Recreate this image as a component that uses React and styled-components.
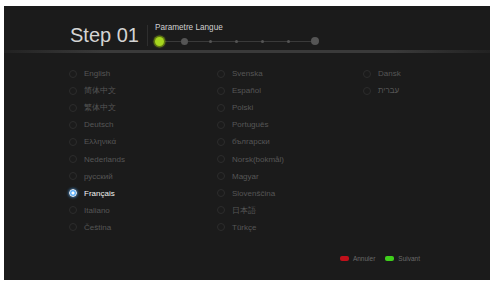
import React from 'react';
import styled, { createGlobalStyle } from 'styled-components';

const GlobalStyle = createGlobalStyle`
  html, body { margin: 0; padding: 0; background: #fff; }
  body { font-family: "Liberation Sans", Arial, sans-serif; }
`;

const Screen = styled.div`
  margin: 6px 2px 0 4px;
  height: 274px;
  background: #1b1b1b;
  display: flex;
  flex-direction: column;
`;

const Header = styled.div`
  height: 44px;
  display: flex;
  align-items: flex-end;
  padding-left: 66px;
  padding-bottom: 2px;
  box-sizing: border-box;
`;

const StepTitle = styled.div`
  font-size: 20px;
  color: #d4d4d4;
  line-height: 1;
  padding-bottom: 1px;
  padding-right: 8px;
  margin-bottom: 2px;
  border-right: 1px solid #2e2e2e;
`;

const StepInfo = styled.div`
  display: flex;
  flex-direction: column;
  padding-left: 7px;
`;

const StepName = styled.div`
  font-size: 8.2px;
  color: #cfcfcf;
  margin-bottom: 2px;
`;

const Track = styled.div`
  position: relative;
  width: 170px;
  height: 14px;
`;

const TrackLine = styled.div`
  position: absolute;
  left: 6px;
  right: 10px;
  top: 7px;
  height: 1px;
  background: #3a3a3a;
`;

const Dot = styled.div`
  position: absolute;
  top: 7px;
  left: ${p => p.$x}px;
  width: ${p => p.$size}px;
  height: ${p => p.$size}px;
  margin: ${p => -p.$size / 2}px 0 0 ${p => -p.$size / 2}px;
  border-radius: 50%;
  background: ${p => (p.$active ? '#a6d61e' : '#555')};
  box-shadow: ${p => (p.$active ? '0 0 0 1.5px #5f7612, 0 0 3px #c7f03a' : 'none')};
`;

const Divider = styled.div`
  height: 3px;
  background: linear-gradient(to right, #222 0%, #3a3a3a 20%, #3a3a3a 80%, #222 100%);
`;

const Grid = styled.div`
  display: grid;
  grid-template-columns: 148px 146px 120px;
  grid-auto-flow: column;
  grid-template-rows: repeat(10, 17.1px);
  padding: 12px 0 0 65px;
`;

const Option = styled.div`
  display: flex;
  align-items: center;
  gap: 7px;
  font-size: 8px;
  color: ${p => (p.$selected ? '#f2f2f2' : '#565656')};
`;

const Radio = styled.span`
  width: 8px;
  height: 8px;
  border-radius: 50%;
  box-sizing: border-box;
  border: 1px solid ${p => (p.$selected ? '#e8f4ff' : '#2c2c2c')};
  background: ${p => (p.$selected ? 'radial-gradient(circle, #ffffff 0 25%, #5fb4ff 45%, #2a7fd0 100%)' : 'transparent')};
  box-shadow: ${p => (p.$selected ? '0 0 3px #4aa8ff' : 'none')};
`;

const Footer = styled.div`
  margin-top: auto;
  display: flex;
  justify-content: flex-end;
  align-items: center;
  gap: 10px;
  padding: 0 70px 18px 0;
`;

const Key = styled.div`
  display: flex;
  align-items: center;
  gap: 4px;
  font-size: 6.5px;
  color: #6a6a6a;
`;

const Pill = styled.span`
  width: 9px;
  height: 5px;
  border-radius: 2px;
  background: ${p => p.$color};
`;

const columns = [
  ['English', '简体中文', '繁体中文', 'Deutsch', 'Ελληνικά', 'Nederlands', 'русский', 'Français', 'Italiano', 'Čeština'],
  ['Svenska', 'Español', 'Polski', 'Português', 'български', 'Norsk(bokmål)', 'Magyar', 'Slovenščina', '日本語', 'Türkçe'],
  ['Dansk', 'עברית'],
];

const dots = [
  { x: 5, size: 9, active: true },
  { x: 30, size: 7 },
  { x: 56, size: 3 },
  { x: 82, size: 3 },
  { x: 108, size: 3 },
  { x: 134, size: 3 },
  { x: 160, size: 8 },
];

export default function App() {
  return (
    <>
      <GlobalStyle />
      <Screen>
        <Header>
          <StepTitle>Step 01</StepTitle>
          <StepInfo>
            <StepName>Parametre Langue</StepName>
            <Track>
              <TrackLine />
              {dots.map((d, i) => (
                <Dot key={i} $x={d.x} $size={d.size} $active={d.active} />
              ))}
            </Track>
          </StepInfo>
        </Header>
        <Divider />
        <Grid>
          {columns.map((col, ci) =>
            col.map((name, ri) => (
              <Option
                key={name}
                $selected={name === 'Français'}
                style={{ gridColumn: ci + 1, gridRow: ri + 1 }}
              >
                <Radio $selected={name === 'Français'} />
                <span>{name}</span>
              </Option>
            ))
          )}
        </Grid>
        <Footer>
          <Key><Pill $color="#c0101a" />Annuler</Key>
          <Key><Pill $color="#3fcf1c" />Suivant</Key>
        </Footer>
      </Screen>
    </>
  );
}
